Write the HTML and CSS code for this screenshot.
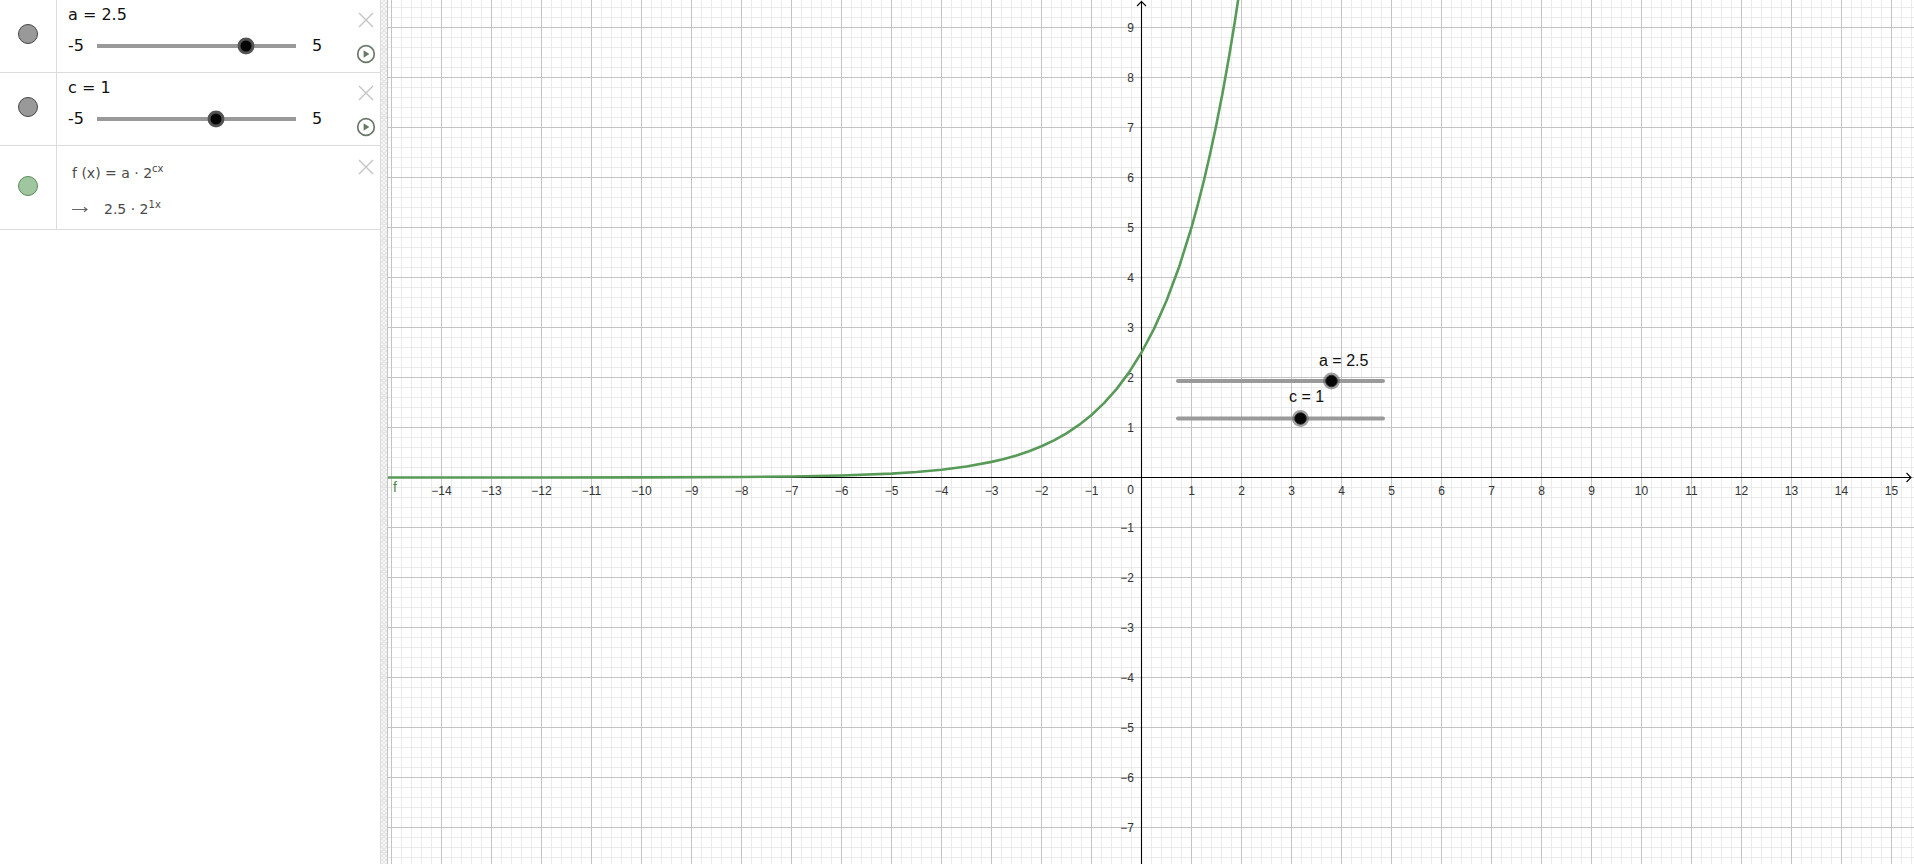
FILE: index.html
```html
<!DOCTYPE html>
<html>
<head>
<meta charset="utf-8">
<title>GeoGebra</title>
<link rel="stylesheet" href="styles.css">
</head>
<body>
<div class="app">
  <aside class="algebra">
    <div class="item">
      <div class="marker"><span class="dot"></span></div>
      <div class="content">
        <div class="def">a = 2.5</div>
        <div class="slider-row">
          <span class="min">-5</span>
          <div class="track"><span class="thumb" style="left:75%"></span></div>
          <span class="max">5</span>
        </div>
      </div>
      <div class="actions">
        <svg class="close" width="16" height="16" viewBox="0 0 16 16"><path d="M1 1L15 15M15 1L1 15"/></svg>
        <svg class="play" width="20" height="20" viewBox="0 0 20 20"><circle cx="10" cy="10" r="8.3"/><path d="M7.6 6.2L13.4 10L7.6 13.8Z"/></svg>
      </div>
    </div>
    <div class="item">
      <div class="marker"><span class="dot"></span></div>
      <div class="content">
        <div class="def">c = 1</div>
        <div class="slider-row">
          <span class="min">-5</span>
          <div class="track"><span class="thumb" style="left:60%"></span></div>
          <span class="max">5</span>
        </div>
      </div>
      <div class="actions">
        <svg class="close" width="16" height="16" viewBox="0 0 16 16"><path d="M1 1L15 15M15 1L1 15"/></svg>
        <svg class="play" width="20" height="20" viewBox="0 0 20 20"><circle cx="10" cy="10" r="8.3"/><path d="M7.6 6.2L13.4 10L7.6 13.8Z"/></svg>
      </div>
    </div>
    <div class="item item-func">
      <div class="marker"><span class="dot dot-green"></span></div>
      <div class="content content-func">
        <div class="formula">f (x) = a · 2<sup>cx</sup></div>
        <div class="formula formula-out"><svg class="arrow" width="16" height="7" viewBox="0 0 16 7"><path d="M0 3.5H14.5M12 1.3L15 3.5L12 5.7"/></svg><span>2.5 · 2<sup>1x</sup></span></div>
      </div>
      <div class="actions actions-func">
        <svg class="close" width="16" height="16" viewBox="0 0 16 16"><path d="M1 1L15 15M15 1L1 15"/></svg>
      </div>
    </div>
  </aside>
  <div class="splitter"></div>
  <main class="graphics">
    <svg class="canvas" width="1526" height="864" viewBox="0 0 1526 864">
      <defs>
        <pattern id="minor" width="10" height="10" patternUnits="userSpaceOnUse" x="3" y="7">
          <path class="grid-minor" d="M0.5 0V10M0 0.5H10"/>
        </pattern>
        <pattern id="major" width="50" height="50" patternUnits="userSpaceOnUse" x="3" y="27">
          <path class="grid-major" d="M0.5 0V50M0 0.5H50"/>
        </pattern>
      </defs>
      <rect width="1526" height="864" fill="url(#minor)"/>
      <rect width="1526" height="864" fill="url(#major)"/>

      <path class="axis" d="M0 477.5H1523M1518.5 473L1523 477.5L1518.5 482M753.5 864V1.5M749 6L753.5 1.5L758 6"/>

      <g class="axis-label xl">
        <text x="53.5" y="495">−14</text>
        <text x="103.5" y="495">−13</text>
        <text x="153.5" y="495">−12</text>
        <text x="203.5" y="495">−11</text>
        <text x="253.5" y="495">−10</text>
        <text x="303.5" y="495">−9</text>
        <text x="353.5" y="495">−8</text>
        <text x="403.5" y="495">−7</text>
        <text x="453.5" y="495">−6</text>
        <text x="503.5" y="495">−5</text>
        <text x="553.5" y="495">−4</text>
        <text x="603.5" y="495">−3</text>
        <text x="653.5" y="495">−2</text>
        <text x="703.5" y="495">−1</text>
        <text x="803.5" y="495">1</text>
        <text x="853.5" y="495">2</text>
        <text x="903.5" y="495">3</text>
        <text x="953.5" y="495">4</text>
        <text x="1003.5" y="495">5</text>
        <text x="1053.5" y="495">6</text>
        <text x="1103.5" y="495">7</text>
        <text x="1153.5" y="495">8</text>
        <text x="1203.5" y="495">9</text>
        <text x="1253.5" y="495">10</text>
        <text x="1303.5" y="495">11</text>
        <text x="1353.5" y="495">12</text>
        <text x="1403.5" y="495">13</text>
        <text x="1453.5" y="495">14</text>
        <text x="1503.5" y="495">15</text>
      </g>
      <g class="axis-label yl">
        <text x="746" y="32">9</text>
        <text x="746" y="82">8</text>
        <text x="746" y="132">7</text>
        <text x="746" y="182">6</text>
        <text x="746" y="232">5</text>
        <text x="746" y="282">4</text>
        <text x="746" y="332">3</text>
        <text x="746" y="382">2</text>
        <text x="746" y="432">1</text>
        <text x="746" y="494">0</text>
        <text x="746" y="532">−1</text>
        <text x="746" y="582">−2</text>
        <text x="746" y="632">−3</text>
        <text x="746" y="682">−4</text>
        <text x="746" y="732">−5</text>
        <text x="746" y="782">−6</text>
        <text x="746" y="832">−7</text>
      </g>

      <polyline class="curve" points="-20,477.5 153.5,477.47 253.5,477.38 353.5,477.01 403.5,476.52 453.5,475.55 503.5,473.59 528.5,471.98 553.5,469.69 578.5,466.45 603.5,461.88 616,458.92 628.5,455.40 641,451.22 653.5,446.25 666,440.34 678.5,433.31 691,424.94 703.5,415.0 716,403.17 728.5,389.11 741,372.39 753.5,352.5 766,328.85 778.5,300.72 791,267.28 803.5,227.5 809.75,204.88 816,180.20 822.25,153.29 828.5,123.95 834.75,91.95 841,57.05 847.25,19.0 853.5,-22.5"/>
      <text class="fn-label" x="5" y="492">f</text>

      <g class="gslider">
        <line class="gtrack" x1="790" y1="381" x2="995" y2="381"/>
        <circle class="ghalo" cx="943.5" cy="381" r="8.5"/>
        <circle class="gknob" cx="943.5" cy="381" r="5.8"/>
        <text class="glabel" x="931" y="366">a = 2.5</text>
      </g>
      <g class="gslider">
        <line class="gtrack" x1="790" y1="418.5" x2="995" y2="418.5"/>
        <circle class="ghalo" cx="912.5" cy="418.5" r="8.5"/>
        <circle class="gknob" cx="912.5" cy="418.5" r="5.8"/>
        <text class="glabel" x="901" y="402">c = 1</text>
      </g>
    </svg>
  </main>
</div>
</body>
</html>
```

FILE: styles.css
```css
html, body {
  margin: 0;
  padding: 0;
  width: 1914px;
  height: 864px;
  overflow: hidden;
  background: #fff;
}

.app {
  display: flex;
  width: 1914px;
  height: 864px;
}

.algebra {
  width: 380px;
  flex: none;
  height: 864px;
  border-right: 1px solid #dcdcdc;
  background: #fff;
  font-family: "DejaVu Sans", sans-serif;
  color: #111;
}

.item {
  display: flex;
  height: 72px;
  border-bottom: 1px solid #dcdcdc;
}

.item-func {
  height: 83px;
}

.marker {
  width: 57px;
  box-sizing: border-box;
  border-right: 1px solid #dcdcdc;
  display: flex;
  align-items: center;
  justify-content: center;
  padding-bottom: 4px;
  flex: none;
}

.dot {
  width: 20px;
  height: 20px;
  box-sizing: border-box;
  border-radius: 50%;
  background: #999;
  border: 1px solid #444;
}

.dot-green {
  background: #a0c6a0;
  border-color: #5b8a5b;
}

.content {
  flex: 1;
  padding-left: 11px;
  padding-top: 5px;
}

.def {
  font-size: 16px;
  line-height: 20px;
  color: #111;
}

.slider-row {
  display: flex;
  align-items: center;
  margin-top: 10.5px;
  height: 20px;
  font-size: 16px;
  line-height: 20px;
  color: #111;
}

.min {
  width: 29px;
  flex: none;
}

.track {
  position: relative;
  width: 199px;
  height: 4px;
  background: #999;
  flex: none;
}

.thumb {
  position: absolute;
  top: 50%;
  width: 11px;
  height: 11px;
  border: 3px solid rgba(110, 110, 110, 0.75);
  background: #050505;
  border-radius: 50%;
  transform: translate(-50%, -50%);
}

.max {
  margin-left: 16px;
}

.actions {
  width: 20px;
  margin-right: 4px;
  display: flex;
  flex-direction: column;
  align-items: center;
  padding-top: 12px;
  flex: none;
}

.actions-func {
  padding-top: 13px;
}

.close path {
  stroke: #c4c4c4;
  stroke-width: 1.4;
  fill: none;
}

.play {
  margin-top: 16px;
}

.play circle {
  fill: none;
  stroke: #6a786a;
  stroke-width: 1.7;
}

.play path {
  fill: #6a786a;
}

.content-func {
  padding-top: 17px;
  padding-left: 15px;
}

.formula {
  font-size: 14px;
  line-height: 20px;
  color: #4a4a4a;
  white-space: nowrap;
}

.formula sup {
  font-size: 10px;
  line-height: 0;
  vertical-align: 6px;
}

.formula-out {
  margin-top: 15.5px;
  display: flex;
  align-items: center;
}

.arrow {
  margin-right: 16px;
  margin-top: 1px;
}

.arrow path {
  stroke: #666;
  stroke-width: 1.2;
  fill: none;
}

.splitter {
  width: 6px;
  flex: none;
  height: 864px;
  border-right: 1px solid #c2c2c2;
  background-color: #f6f6f6;
  background-image: repeating-linear-gradient(45deg, #e6e6e6 0 1px, transparent 1px 3px),
    repeating-linear-gradient(-45deg, #e6e6e6 0 1px, transparent 1px 3px);
}

.graphics {
  flex: 1;
  height: 864px;
  overflow: hidden;
  background: #fff;
}

.canvas {
  display: block;
}

.grid-minor {
  stroke: #ebebeb;
  stroke-width: 1;
  fill: none;
}

.grid-major {
  stroke: #c4c4c4;
  stroke-width: 1;
  fill: none;
}

.axis {
  stroke: #000;
  stroke-width: 1.1;
  fill: none;
}

.axis-label {
  font-family: "Liberation Sans", Arial, sans-serif;
  font-size: 12px;
  fill: #333;
}

.xl text {
  text-anchor: middle;
}

.yl text {
  text-anchor: end;
}

.curve {
  fill: none;
  stroke: #589a58;
  stroke-width: 2.6;
  stroke-linejoin: round;
}

.fn-label {
  font-family: "Liberation Sans", Arial, sans-serif;
  font-size: 14px;
  fill: #4d8a4d;
}

.gtrack {
  stroke: #9a9a9a;
  stroke-width: 4;
  stroke-linecap: round;
}

.ghalo {
  fill: rgba(100, 100, 100, 0.6);
}

.gknob {
  fill: #050505;
  stroke: #222;
  stroke-width: 0.8;
}

.glabel {
  font-family: "Liberation Sans", Arial, sans-serif;
  font-size: 16px;
  fill: #111;
}
```
